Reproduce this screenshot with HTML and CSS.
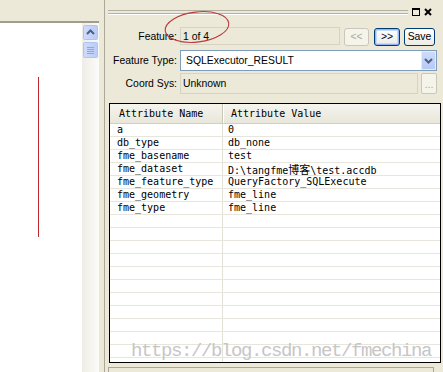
FILE: index.html
```html
<!DOCTYPE html>
<html lang="en">
<head>
    <meta charset="UTF-8">
    <title>Feature Information</title>
    <link rel="stylesheet" href="styles.css">
</head>
<body>
    <div class="window">
        <!-- map view on the left -->
        <div class="left-pane">
            <div class="left-top"></div>
            <div class="left-body">
                <div class="canvas">
                    <div class="red-line"></div>
                </div>
                <div class="vscroll">
                    <div class="scroll-btn">
                        <svg width="15" height="15" viewBox="0 0 15 15"><path d="M4 9 L7.5 5.5 L11 9" fill="none" stroke="#4d6185" stroke-width="2"/></svg>
                    </div>
                    <div class="scroll-thumb">
                        <svg width="15" height="16" viewBox="0 0 15 16"><path d="M4 5.5h7M4 7.5h7M4 9.5h7M4 11.5h7" stroke="#8ba6e6" stroke-width="1"/></svg>
                    </div>
                </div>
            </div>
        </div>

        <div class="splitter"></div>

        <!-- feature information window -->
        <div class="inspector">
            <div class="dock-bar">
                <div class="gripper"></div>
                <svg class="dock-icon" width="8" height="8" viewBox="0 0 8 8"><rect x="0.5" y="0.5" width="7" height="7" fill="none" stroke="#000"/><rect x="0" y="0" width="8" height="2" fill="#000"/></svg>
                <svg class="dock-icon" width="8" height="8" viewBox="0 0 8 8"><path d="M1 1 L7 7 M7 1 L1 7" stroke="#000" stroke-width="2"/></svg>
            </div>

            <div class="form-row row-feature">
                <label class="form-label">Feature:</label>
                <div class="field static field-feature">1 of 4</div>
                <button class="btn btn-nav" disabled>&lt;&lt;</button>
                <button class="btn btn-nav btn-default">&gt;&gt;</button>
                <button class="btn btn-save">Save</button>
            </div>

            <div class="form-row row-type">
                <label class="form-label">Feature Type:</label>
                <div class="field combo">
                    <span class="combo-text">SQLExecutor_RESULT</span>
                    <div class="combo-btn">
                        <svg width="15" height="19" viewBox="0 0 15 19"><path d="M4 8 L7.5 11.5 L11 8" fill="none" stroke="#4d6185" stroke-width="2"/></svg>
                    </div>
                </div>
            </div>

            <div class="form-row row-coord">
                <label class="form-label">Coord Sys:</label>
                <div class="field static field-coord">Unknown</div>
                <button class="btn btn-more" disabled>...</button>
            </div>

            <div class="attr-table">
                <div class="attr-head">
                    <div class="col-name">Attribute Name</div>
                    <div class="col-value">Attribute Value</div>
                </div>
                <div class="attr-body">
                    <div class="attr-row"><div class="col-name">a</div><div class="col-value">0</div></div>
                    <div class="attr-row"><div class="col-name">db_type</div><div class="col-value">db_none</div></div>
                    <div class="attr-row"><div class="col-name">fme_basename</div><div class="col-value">test</div></div>
                    <div class="attr-row"><div class="col-name">fme_dataset</div><div class="col-value">D:\tangfme<span class="cjk">博客</span>\test.accdb</div></div>
                    <div class="attr-row"><div class="col-name">fme_feature_type</div><div class="col-value">QueryFactory_SQLExecute</div></div>
                    <div class="attr-row"><div class="col-name">fme_geometry</div><div class="col-value">fme_line</div></div>
                    <div class="attr-row"><div class="col-name">fme_type</div><div class="col-value">fme_line</div></div>
                    <div class="attr-row"><div class="col-name"></div><div class="col-value"></div></div>
                    <div class="attr-row"><div class="col-name"></div><div class="col-value"></div></div>
                    <div class="attr-row"><div class="col-name"></div><div class="col-value"></div></div>
                    <div class="attr-row"><div class="col-name"></div><div class="col-value"></div></div>
                    <div class="attr-row"><div class="col-name"></div><div class="col-value"></div></div>
                    <div class="attr-row"><div class="col-name"></div><div class="col-value"></div></div>
                    <div class="attr-row"><div class="col-name"></div><div class="col-value"></div></div>
                    <div class="attr-row"><div class="col-name"></div><div class="col-value"></div></div>
                    <div class="attr-row"><div class="col-name"></div><div class="col-value"></div></div>
                    <div class="attr-row"><div class="col-name"></div><div class="col-value"></div></div>
                    <div class="attr-row"><div class="col-name"></div><div class="col-value"></div></div>
                    <div class="attr-row"><div class="col-name"></div><div class="col-value"></div></div>
                </div>
                <div class="watermark">https://blog.csdn.net/fmechina</div>
            </div>

            <div class="bottom-box"></div>
        </div>

        <!-- hand drawn circle round the feature counter -->
        <svg class="annotation" width="443" height="372" viewBox="0 0 443 372">
            <ellipse cx="197" cy="27" rx="32" ry="15" fill="none" stroke="#bb3b3b" stroke-width="1.1" transform="rotate(-7 197 27)"/>
        </svg>
    </div>
</body>
</html>
```

FILE: styles.css
```css
body {
    margin: 0;
    background-color: #ece9d8;
    font-family: "Liberation Sans", Arial, sans-serif;
}
.window {
    position: relative;
    display: flex;
    width: 443px;
    height: 372px;
    overflow: hidden;
    background-color: #ece9d8;
}

/* left map pane */
.left-pane {
    display: flex;
    flex-direction: column;
    width: 99px;
}
.left-top {
    height: 21px;
    border-bottom: 2px solid #a09d8e;
}
.left-body {
    display: flex;
    flex: 1;
}
.canvas {
    width: 82px;
    background-color: #fff;
}
.red-line {
    width: 1px;
    height: 160px;
    margin-top: 54px;
    margin-left: 38px;
    background-color: #c0282d;
}
.vscroll {
    width: 17px;
    background: linear-gradient(to right, #eeede5, #fbfbf8);
}
.scroll-btn, .scroll-thumb {
    width: 15px;
    margin-left: 1px;
    margin-top: 2px;
    border-radius: 2px;
    background: linear-gradient(to right, #d0dcfc, #b9cbf7);
    box-shadow: inset 0 0 0 1px #e6eefe;
    outline: 1px solid #b1c3ef;
    outline-offset: -1px;
}
.scroll-btn {
    height: 15px;
}
.scroll-thumb {
    height: 16px;
}
.scroll-btn svg, .scroll-thumb svg {
    display: block;
}

.splitter {
    width: 5px;
    border-right: 1px solid #aca899;
}

/* feature information window */
.inspector {
    display: flex;
    flex-direction: column;
    flex: 1;
    padding: 0 6px 0 3px;
}
.dock-bar {
    display: flex;
    align-items: flex-start;
    height: 27px;
}
.gripper {
    flex: 1;
    height: 2px;
    margin-top: 10px;
    border-top: 1px solid #b4b1a2;
    border-bottom: 1px solid #b4b1a2;
    box-shadow: 0 1px 0 #fff;
}
.dock-icon {
    margin-top: 8px;
}
.dock-icon:first-of-type {
    margin-left: 4px;
}
.dock-icon + .dock-icon {
    margin-left: 4px;
    margin-right: 5px;
}

.form-row {
    display: flex;
    align-items: center;
    font-size: 10.4px;
}
.row-feature {
    height: 19px;
    margin-bottom: 4px;
}
.row-type {
    height: 21px;
    margin-bottom: 2px;
}
.row-coord {
    height: 21px;
}
.form-label {
    width: 69px;
    margin-right: 3px;
    text-align: right;
    color: #000;
}
.field {
    box-sizing: border-box;
    display: flex;
    align-items: center;
    height: 100%;
    padding-left: 2px;
    color: #000;
}
.static {
    border: 1px solid #d6d3c3;
    background-color: #ece9d8;
}
.field-feature {
    width: 160px;
    height: 18px;
    align-self: flex-start;
}
.field-coord {
    flex: 1;
}
.combo {
    flex: 1;
    border: 1px solid #7f9db9;
    background-color: #fff;
    padding-left: 5px;
}
.combo-text {
    flex: 1;
}
.combo-btn {
    width: 15px;
    height: 19px;
    border-radius: 2px;
    background: linear-gradient(#cfdcfb, #b5c8f6);
    box-shadow: inset 0 0 0 1px #e4ecfd;
}
.combo-btn svg {
    display: block;
}

.btn {
    box-sizing: border-box;
    height: 18px;
    padding: 0;
    border: 1px solid #003c74;
    border-radius: 3px;
    background: linear-gradient(#ffffff, #ecebe6);
    font-family: "Liberation Sans", Arial, sans-serif;
    font-size: 10.4px;
    color: #000;
}
.btn:disabled {
    border-color: #c9c7ba;
    background: #f5f4ea;
    color: #aca899;
}
.btn-nav {
    width: 25px;
    margin-left: 4px;
}
.btn-default {
    width: 26px;
    margin-left: 5px;
    box-shadow: inset 0 0 0 1px #95b6f4, inset 0 0 0 2px #c8dafc;
}
.btn-save {
    width: 31px;
    margin-left: 4px;
}
.btn-more {
    width: 16px;
    height: 21px;
    margin-left: 3px;
    border-radius: 2px;
    font-size: 11px;
    line-height: 14px;
}

/* attribute list */
.attr-table {
    position: relative;
    height: 258px;
    margin-top: 9px;
    margin-left: 1px;
    margin-right: -4px;
    border: 1px solid #000;
    background-color: #fff;
    font-family: "DejaVu Sans Mono", "Liberation Mono", "Noto Sans CJK SC", monospace;
    font-size: 10px;
    overflow: hidden;
}
.attr-head {
    display: flex;
    height: 19px;
    border-bottom: 1px solid #d4d0c1;
    background: linear-gradient(#f5f4ee, #e9e7da);
    line-height: 19px;
}
.attr-head .col-name {
    width: 103px;
    padding-left: 9px;
    border-right: 1px solid #cbc7b8;
    box-shadow: 1px 0 0 #fff;
}
.attr-head .col-value {
    padding-left: 8px;
}
.attr-body {
    height: 238px;
    overflow: hidden;
}
.attr-row {
    display: flex;
    height: 12px;
    border-bottom: 1px solid #e8e6dc;
    line-height: 12px;
    color: #000;
}
.attr-row .col-name {
    width: 105px;
    padding-left: 7px;
    border-right: 1px solid #e3e1d5;
}
.attr-row .col-value {
    padding-left: 5px;
    white-space: nowrap;
}
.cjk {
    font-family: "Noto Sans CJK SC", sans-serif;
    font-size: 11px;
}
.watermark {
    position: absolute;
    left: 21px;
    top: 238px;
    font-family: "Liberation Mono", monospace;
    font-size: 19px;
    line-height: 19px;
    letter-spacing: -1.4px;
    color: #c6c6c6;
    white-space: nowrap;
}

.bottom-box {
    flex: 1;
    margin-top: 4px;
    margin-right: 3px;
    border-top: 1px solid #aca899;
    border-left: 1px solid #aca899;
    border-right: 1px solid #aca899;
}

.annotation {
    position: absolute;
    left: 0;
    top: 0;
    pointer-events: none;
}
```
